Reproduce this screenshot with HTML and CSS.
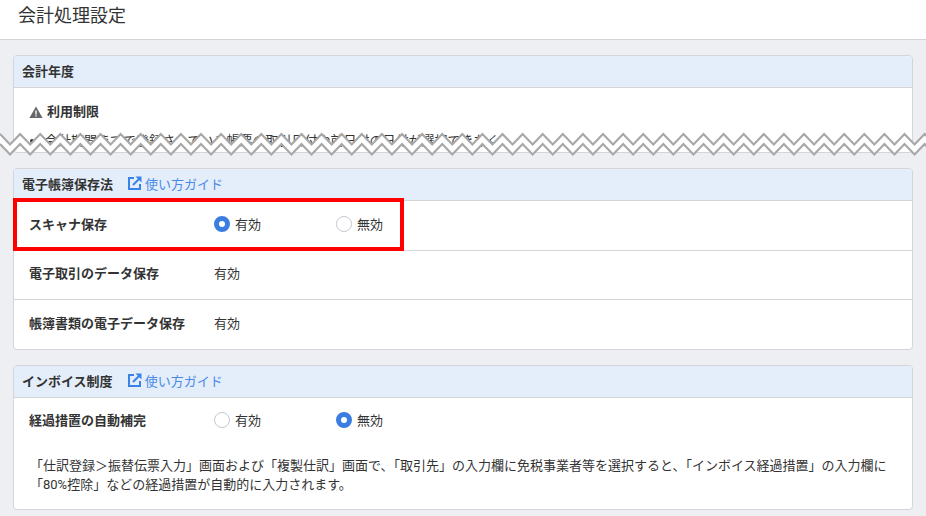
FILE: index.html
```html
<!DOCTYPE html>
<html lang="ja">
<head>
  <meta charset="UTF-8">
  <title>会計処理設定</title>
  <link rel="stylesheet" href="styles.css">
</head>
<body>
  <header class="page-header">
    <h1>会計処理設定</h1>
  </header>

  <main class="content">
    <section class="card card-year">
      <h2 class="card-title"><span>会計年度</span></h2>
      <div class="notice">
        <h3 class="notice-title">
          <svg class="warn-icon" width="14" height="14" viewBox="0 0 14 14"><path d="M7 1.5 L13.6 13 H.4 Z M6.3 5.5 V9.5 H7.7 V5.5 Z M6.3 10.2 V11.6 H7.7 V10.2 Z" fill="#666" fill-rule="evenodd"/></svg>
          利用制限
        </h3>
        <ul class="notice-list">
          <li>会計期間までで登録されている帳票の取引日付や前日付の日付が選択できなく</li>
        </ul>
      </div>
    </section>

    <svg class="zigzag" width="926" height="26" viewBox="0 0 926 26">
      <polygon id="zz-fill" fill="#fff" points=""/>
      <polyline id="zz-top" fill="none" stroke="#a8a8a8" stroke-width="2.2" points=""/>
      <polyline id="zz-bottom" fill="none" stroke="#a8a8a8" stroke-width="2.2" points=""/>
    </svg>

    <section class="card">
      <h2 class="card-title">
        <span>電子帳簿保存法</span>
        <a class="guide-link" href="#">
          <svg width="14" height="14" viewBox="0 0 14 14" fill="none" stroke="#3b82e6" stroke-width="2"><path d="M6 2 H1 V13 H12 V8"/><path d="M5 9 L12 2"/><path d="M7.5 .5 H13.5 V6.5 Z" fill="#3b82e6" stroke="none"/></svg>
          使い方ガイド
        </a>
      </h2>
      <div class="row row-marked">
        <div class="row-label">スキャナ保存</div>
        <div class="radio-group">
          <label class="radio"><span class="radio-dot on"></span>有効</label>
          <label class="radio"><span class="radio-dot"></span>無効</label>
        </div>
        <div class="red-box"></div>
      </div>
      <div class="row">
        <div class="row-label">電子取引のデータ保存</div>
        <div class="row-value">有効</div>
      </div>
      <div class="row">
        <div class="row-label">帳簿書類の電子データ保存</div>
        <div class="row-value">有効</div>
      </div>
    </section>

    <section class="card">
      <h2 class="card-title">
        <span>インボイス制度</span>
        <a class="guide-link" href="#">
          <svg width="14" height="14" viewBox="0 0 14 14" fill="none" stroke="#3b82e6" stroke-width="2"><path d="M6 2 H1 V13 H12 V8"/><path d="M5 9 L12 2"/><path d="M7.5 .5 H13.5 V6.5 Z" fill="#3b82e6" stroke="none"/></svg>
          使い方ガイド
        </a>
      </h2>
      <div class="row row-plain">
        <div class="row-label">経過措置の自動補完</div>
        <div class="radio-group">
          <label class="radio"><span class="radio-dot"></span>有効</label>
          <label class="radio"><span class="radio-dot on"></span>無効</label>
        </div>
      </div>
      <p class="note">「仕訳登録＞振替伝票入力」画面および「複製仕訳」画面で、「取引先」の入力欄に免税事業者等を選択すると、「インボイス経過措置」の入力欄に「80%控除」などの経過措置が自動的に入力されます。</p>
    </section>
  </main>

  <script src="zigzag.js"></script>
</body>
</html>
```

FILE: styles.css
```css
body {
  margin: 0;
  background: #eeeff3;
  color: #333;
  font-family: Roboto, 'Noto Sans CJK JP', sans-serif;
  font-size: 13px;
  height: 516px;
  overflow: hidden;
  position: relative;
}

.page-header {
  height: 39px;
  background: #fff;
  border-bottom: 1px solid #d3d5d9;
  padding-left: 18px;
}
.page-header h1 {
  margin: 0;
  font-size: 18px;
  font-weight: 400;
  line-height: 32px;
}

.content {
  padding: 15px 13px 0 13px;
  display: flex;
  flex-direction: column;
  gap: 15px;
}

.card {
  background: #fff;
  border: 1px solid #d3d5d9;
  border-radius: 4px;
}
.card-year {
  height: 96px;
  overflow: hidden;
}

.card-title {
  margin: 0;
  box-sizing: border-box;
  height: 32px;
  background: #e4eefb;
  border-bottom: 1px solid #d3d5d9;
  border-radius: 3px 3px 0 0;
  padding: 0 0 3px 8px;
  display: flex;
  align-items: center;
  gap: 15px;
  font-size: 13px;
  font-weight: 700;
}

.guide-link {
  display: flex;
  align-items: center;
  gap: 3px;
  color: #4a8ae6;
  font-weight: 400;
  text-decoration: none;
}

.notice {
  padding: 14px 15px 0 15px;
}
.notice-title {
  margin: 0;
  font-size: 13px;
  font-weight: 700;
  display: flex;
  align-items: center;
  gap: 4px;
  line-height: 19px;
}
.notice-list {
  margin: 10px 0 0 0;
  padding-left: 16px;
  line-height: 19px;
}

.zigzag {
  position: absolute;
  left: 0;
  top: 131px;
}

.row {
  box-sizing: border-box;
  display: flex;
  align-items: center;
  height: 49px;
  padding: 0 0 3px 15px;
  border-bottom: 1px solid #d3d5d9;
  position: relative;
}
.row-marked {
  height: 50px;
}
.row:last-child {
  border-bottom: none;
  padding-bottom: 3px;
}
.row-plain {
  border-bottom: none;
  height: 47px;
}
.row-label {
  width: 185px;
  font-weight: 700;
  margin-top: -2px;
}
.row-value {
  margin-top: -2px;
}

.radio-group {
  display: flex;
}
.radio {
  width: 122px;
  display: flex;
  align-items: center;
  gap: 5px;
  margin-top: -2px;
}
.radio-dot {
  box-sizing: border-box;
  width: 16px;
  height: 16px;
  margin-top: 2px;
  border-radius: 50%;
  border: 1px solid #c4c8ce;
  background: #fff;
}
.radio-dot.on {
  border: 5px solid #3b7de0;
}

.red-box {
  position: absolute;
  left: -1px;
  top: -3px;
  width: 391px;
  height: 53px;
  box-sizing: border-box;
  border: 4px solid #f00;
}

.note {
  margin: 0;
  padding: 11px 16px 15px 16px;
  line-height: 19px;
}
```

FILE: zigzag.js
```js
// torn-edge band: two parallel zigzag lines with white between them
var top_ = [], bottom = [];
for (var i = 0; i <= 94; i++) {
  var x = i * 10.05;
  var down = i % 2 === 1;
  top_.push([x, down ? 13.5 : 3]);
  bottom.push([x, down ? 23.5 : 13]);
}
function str(list) {
  return list.map(function (p) { return p.join(','); }).join(' ');
}
document.getElementById('zz-top').setAttribute('points', str(top_));
document.getElementById('zz-bottom').setAttribute('points', str(bottom));
document.getElementById('zz-fill').setAttribute('points', str(top_) + ' ' + str(bottom.slice().reverse()));
```
